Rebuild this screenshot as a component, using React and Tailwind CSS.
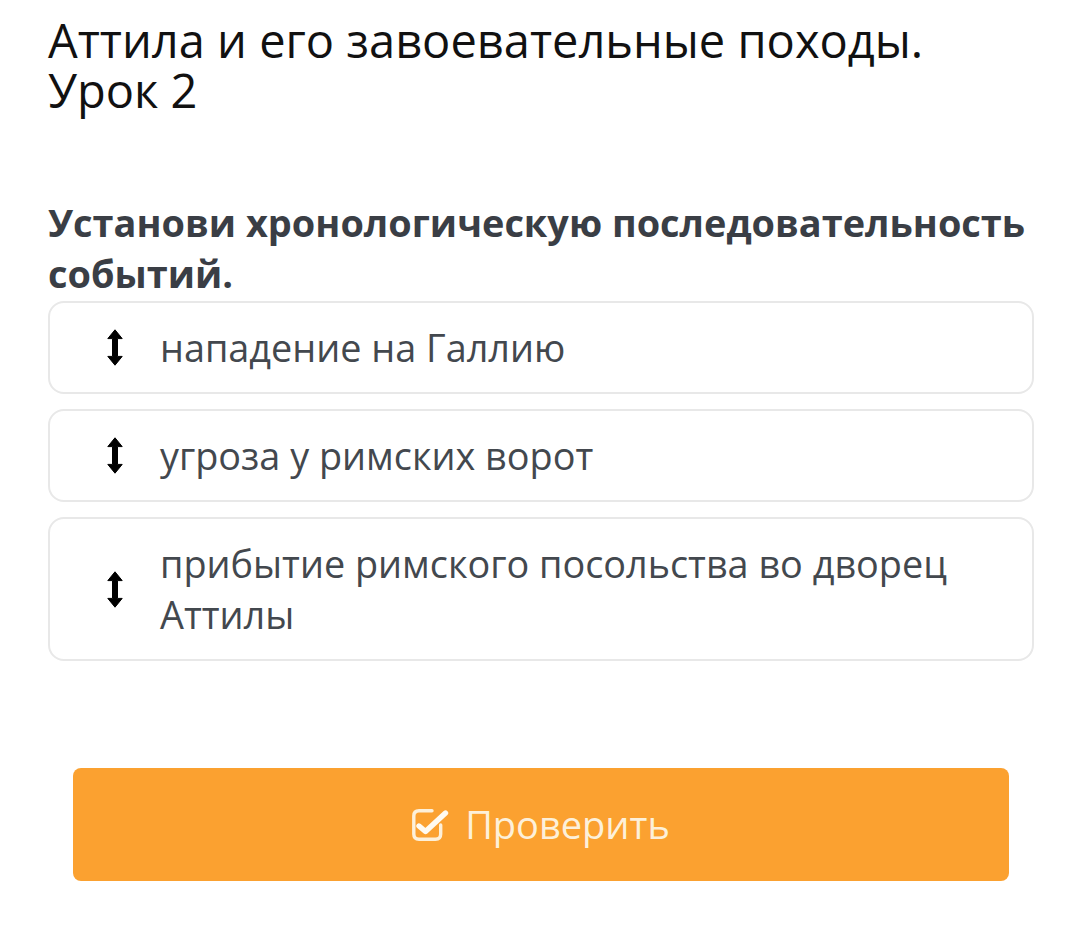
import React from "react";

const items = [
  "нападение на Галлию",
  "угроза у римских ворот",
  "прибытие римского посольства во дворец Аттилы",
];

function DragIcon() {
  return (
    <svg width="16" height="37" viewBox="0 0 16 37" className="shrink-0">
      <path
        d="M8 0.8 L15.2 9.6 L10.5 9.6 L10.5 27.4 L15.2 27.4 L8 36.2 L0.8 27.4 L5.5 27.4 L5.5 9.6 L0.8 9.6 Z"
        fill="#000"
        stroke="#000"
        strokeWidth="1"
        strokeLinejoin="round"
      />
    </svg>
  );
}

function CheckIcon() {
  return (
    <svg width="37" height="32" viewBox="0 0 37 32" fill="none" className="shrink-0">
      <path
        d="M20 1.8 H7 Q1.8 1.8 1.8 7 V25 Q1.8 30.2 7 30.2 H23.5 Q28.7 30.2 28.7 25 V16"
        stroke="currentColor"
        strokeWidth="3.4"
        strokeLinecap="round"
        strokeLinejoin="round"
      />
      <path
        d="M7 17 L13.5 22.5 L33.5 4"
        stroke="#fffaf0"
        strokeWidth="5.4"
        strokeLinecap="round"
        strokeLinejoin="round"
      />
    </svg>
  );
}

export default function App() {
  return (
    <div className="min-h-[940px] w-[1072px] bg-white pl-[48px] pr-[38px] pt-[15px]" style={{ fontFamily: '"Open Sans", "Noto Sans", sans-serif' }}>
      <h1 className="text-[47px] leading-[50px] text-[#111111] font-normal">
        Аттила и его завоевательные походы.
        <br />
        Урок 2
      </h1>
      <h2 className="mt-[82px] text-[37.9px] leading-[51px] font-bold text-[#3a3e45]">
        Установи хронологическую последовательность событий.
      </h2>
      <div className="mt-[2px] flex flex-col gap-[15px]">
        {items.map((t) => (
          <div key={t} className="flex items-center rounded-[16px] border-2 border-[#e8e8e8] bg-white py-[19px] pl-[57px] pr-[40px]">
            <DragIcon />
            <span className="ml-[37px] text-[37.8px] leading-[51px] text-[#43484e]">{t}</span>
          </div>
        ))}
      </div>
      <div className="mt-[107px] px-[25px]">
        <button className="flex h-[113px] w-full items-center justify-center gap-[16px] rounded-[8px] bg-[#fba130] text-[38px] text-[#fdf0d9]">
          <CheckIcon />
          <span>Проверить</span>
        </button>
      </div>
    </div>
  );
}
